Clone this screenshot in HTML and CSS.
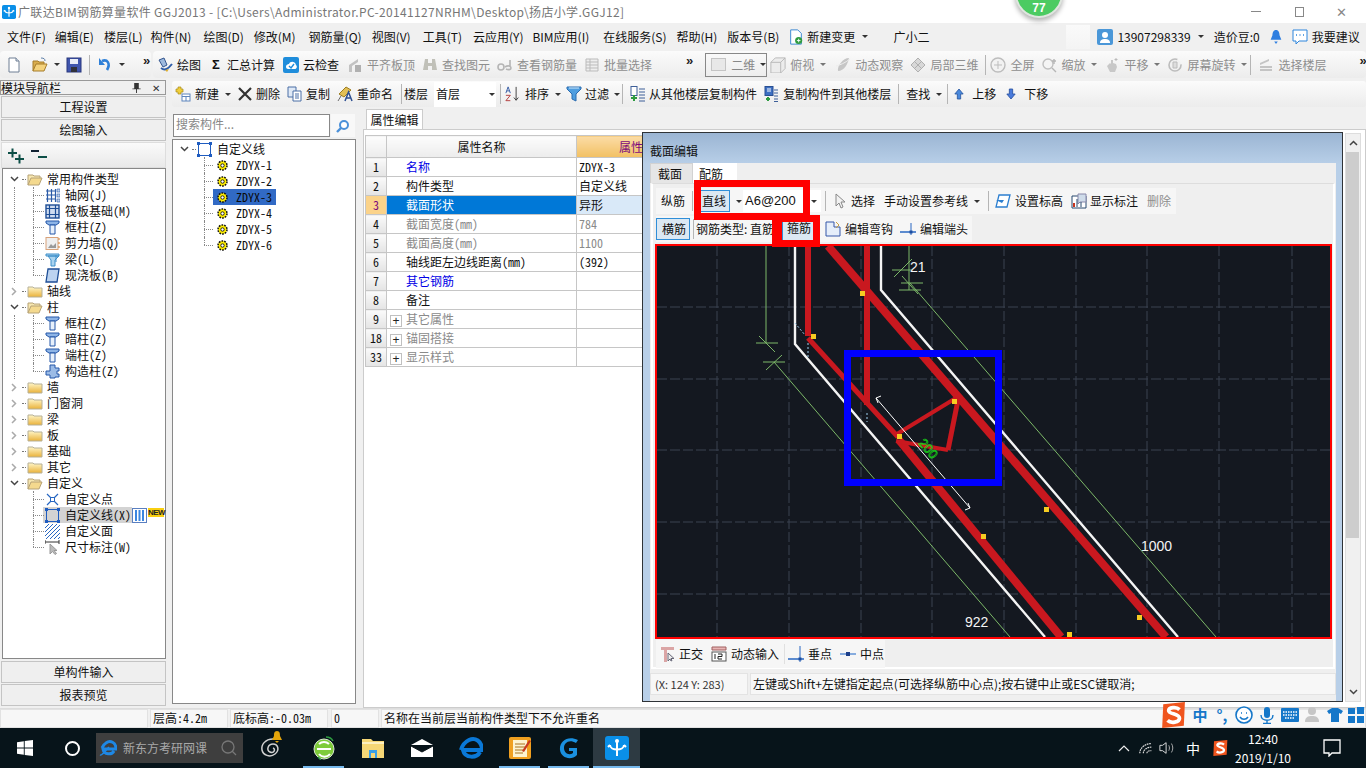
FILE: index.html
```html
<!DOCTYPE html>
<html lang="zh-CN">
<head>
<meta charset="utf-8">
<title>广联达BIM钢筋算量软件 GGJ2013</title>
<link rel="stylesheet" href="styles.css">
</head>
<body>
<svg class="sprite" width="0" height="0">
<defs>
<symbol id="doc" viewBox="0 0 16 16"><path d="M3 1h7l3 3v11H3z" fill="#fff" stroke="#6f7f94"/><path d="M10 1v3h3" fill="#dfe6ee" stroke="#6f7f94"/></symbol>
<symbol id="open" viewBox="0 0 16 16"><path d="M1 14V4h5l1 1h5v2" fill="#d9ad4e" stroke="#a67c2a"/><path d="M1 14l3-7h11l-3 7z" fill="#f4d27c" stroke="#a67c2a"/><path d="M9 1c3 0 4 1 4 3" fill="none" stroke="#5d7fa8"/></symbol>
<symbol id="save" viewBox="0 0 16 16"><rect x="1" y="1" width="14" height="14" fill="#3f55ad" stroke="#28377c"/><rect x="4" y="2" width="8" height="5" fill="#e9edf7"/><rect x="5" y="10" width="6" height="5" fill="#30313a"/></symbol>
<symbol id="undo" viewBox="0 0 16 16"><path d="M5 4c5-2 9 2 5 9" fill="none" stroke="#2f80d8" stroke-width="2.6"/><path d="M2 1v7h6z" fill="#2f80d8"/></symbol>
<symbol id="brush" viewBox="0 0 16 16"><path d="M2 3l5-2 3 7-4 2z" fill="#9db9dd" stroke="#35568f"/><path d="M4 11c4 3 7 1 11-4" fill="none" stroke="#2d5ca8" stroke-width="2"/><path d="M8 13l4-1-2 3z" fill="#e0b030"/></symbol>
<symbol id="cloudchk" viewBox="0 0 16 16"><rect width="16" height="16" rx="2" fill="#1f8ddb"/><path d="M3 10c0-3 3-3 3-3 1-3 6-3 7 1 2 2 0 4-1 4H5c-1 0-2-1-2-2z" fill="#fff"/><path d="M6 9l2 2 3-4" fill="none" stroke="#1f8ddb" stroke-width="1.4"/></symbol>
<symbol id="g-level" viewBox="0 0 16 16"><path d="M2 8l9-6v3L5 9v6H2z" fill="#c2c2c2"/><rect x="8" y="8" width="6" height="7" fill="#b0b0b0"/></symbol>
<symbol id="g-bino" viewBox="0 0 16 16"><path d="M3 2h3v4h4V2h3l2 11h-5V9H6v4H1z" fill="#c0c0b8"/></symbol>
<symbol id="g-glass" viewBox="0 0 16 16"><circle cx="4" cy="10" r="3" fill="none" stroke="#b5b5b5" stroke-width="1.6"/><path d="M8 10c3-2 6-1 6 1s-3 2-5 1M13 3v7" fill="none" stroke="#b5b5b5" stroke-width="1.6"/></symbol>
<symbol id="g-batch" viewBox="0 0 16 16"><path d="M2 2h12v12H2z" fill="#eee" stroke="#bbb"/><path d="M2 5h12M2 8h12M2 11h12M6 2v12" stroke="#bbb"/></symbol>
<symbol id="g-cube" viewBox="0 0 18 18"><path d="M1 6l5-5h11v12l-5 5H1z" fill="#ececec" stroke="#b5b5b5"/><path d="M1 6h11v12M12 6l5-5" fill="none" stroke="#b5b5b5"/></symbol>
<symbol id="g-orbit" viewBox="0 0 16 16"><path d="M3 14c-1-5 5-13 11-13-1 6-5 13-11 13z" fill="#c6c6c6"/><path d="M1 9c4-1 9-3 14-7" stroke="#eee" fill="none"/></symbol>
<symbol id="g-local" viewBox="0 0 16 16"><path d="M8 1l7 7-7 7-7-7z" fill="#d8d8d8" stroke="#b0b0b0"/><path d="M4 4l8 8M12 4l-8 8" stroke="#b0b0b0"/></symbol>
<symbol id="g-full" viewBox="0 0 16 16"><circle cx="8" cy="8" r="7" fill="#f2f2f2" stroke="#bdbdbd" stroke-width="1.4"/><path d="M8 4v8M4 8h8" stroke="#bdbdbd"/></symbol>
<symbol id="g-zoom" viewBox="0 0 16 16"><circle cx="7" cy="7" r="5" fill="#f4f4f4" stroke="#c0c0c0" stroke-width="1.4"/><path d="M11 11l4 4M13 2v5M11 4h4" stroke="#b5b5b5" stroke-width="1.4"/></symbol>
<symbol id="g-pan" viewBox="0 0 16 16"><path d="M3 9l3-3 1 1V3h2v3l3 1 1 3-2 5H6z" fill="#c8c8c8"/><path d="M12 1v3M10.500 2.500h3" stroke="#bbb"/></symbol>
<symbol id="g-rot" viewBox="0 0 16 16"><circle cx="8" cy="8" r="6" fill="#f1f1f1" stroke="#bcbcbc" stroke-width="1.6" stroke-dasharray="30 6"/><path d="M6 5h4v6H6z" fill="#ddd" stroke="#bbb"/></symbol>
<symbol id="g-layer" viewBox="0 0 16 16"><path d="M2 6l9-4v2L2 8zM2 9h12v2H2zM2 12h12v2H2z" fill="#c4c4c4"/></symbol>
<symbol id="newb" viewBox="0 0 16 16"><path d="M3 1h3v2h2v3H6v2H3V6H1V3h2z" fill="#f1cf3b" stroke="#a88a1a" stroke-width=".7"/><rect x="7" y="8" width="8" height="7" fill="#fff" stroke="#5f86bd"/><path d="M7 10.500h8M11 10v5" stroke="#5f86bd"/></symbol>
<symbol id="cross" viewBox="0 0 16 16"><path d="M2 2l12 12M14 2L2 14" stroke="#333" stroke-width="2.2"/></symbol>
<symbol id="copy" viewBox="0 0 16 16"><path d="M1 1h8v10H1z" fill="#dfe9f6" stroke="#4a6fa5"/><path d="M6 5h8v10H6z" fill="#fff" stroke="#4a6fa5"/><path d="M8 8h4M8 10h4M8 12h4" stroke="#4a6fa5"/></symbol>
<symbol id="rename" viewBox="0 0 16 16"><path d="M2 8l7-7 5 3-7 7z" fill="#e2bf55" stroke="#9b7c20"/><path d="M8 15l3.500-9 3.500 9M9.500 12h4" fill="none" stroke="#2d4f91" stroke-width="1.500"/><path d="M1 15l3-5" stroke="#6e6e6e"/></symbol>
<symbol id="sort" viewBox="0 0 18 18"><path d="M1 8l2.500-7L6 8M2 5.500h3" fill="none" stroke="#2c53a0"/><path d="M1 10.500h5L1 16.500h5" fill="none" stroke="#b03232"/><path d="M12.500 1v15M10 13l2.500 3 2.500-3" fill="none" stroke="#333"/></symbol>
<symbol id="funnel" viewBox="0 0 16 16"><path d="M1 1h14v2l-5 5v7l-4-2V8L1 3z" fill="#4f9ee0" stroke="#2b6cb0"/><path d="M3 2h10" stroke="#cfe7fb"/></symbol>
<symbol id="fromf" viewBox="0 0 16 16"><rect x="1" y="0.500" width="6" height="9" fill="#fff" stroke="#3d5f98"/><path d="M9 3h6M9 6h6M9 9h6M9 12h6M9 15h6" stroke="#3d5f98"/><path d="M1 12h6M4 9v6" stroke="#2e9b40" stroke-width="2"/></symbol>
<symbol id="tof" viewBox="0 0 16 16"><rect x="2" y="0.500" width="8" height="9" fill="#3d6fc2" stroke="#294f92"/><path d="M4 3h4M4 5h4" stroke="#fff"/><path d="M11 4h4M11 7h4M11 10h4M11 13h4M11 15.500h4" stroke="#3d5f98"/><path d="M5 11v4M3 13h4" stroke="#2e9b40" stroke-width="2"/></symbol>
<symbol id="up" viewBox="0 0 12 14"><path d="M6 1l5 6H8v6H4V7H1z" fill="#4a89dc" stroke="#28569f"/></symbol>
<symbol id="down" viewBox="0 0 12 14"><path d="M6 13L1 7h3V1h4v6h3z" fill="#4a7bdc" stroke="#28509f"/></symbol>
<symbol id="plusminus" viewBox="0 0 42 18"><path d="M1 6h9M5.500 1.500v9M8 12h9M12.500 7.500v9" stroke="#0d4f47" stroke-width="2"/><path d="M24 4h8" stroke="#123" stroke-width="2"/><path d="M31 10h9" stroke="#0d4f47" stroke-width="2"/></symbol>
<symbol id="chev-d" viewBox="0 0 9 6"><path d="M1 1l3.500 3.500L8 1" fill="none" stroke="#444" stroke-width="1.500"/></symbol>
<symbol id="chev-r" viewBox="0 0 6 9"><path d="M1 1l3.500 3.500L1 8" fill="none" stroke="#aaa" stroke-width="1.500"/></symbol>
<symbol id="fold" viewBox="0 0 16 13"><path d="M1 12V2h5l1 1h8v9z" fill="url(#fy)" stroke="#b6b097"/><defs><linearGradient id="fy" x1="0" y1="0" x2="0" y2="1"><stop offset="0" stop-color="#fff6c8"/><stop offset="1" stop-color="#eab23a"/></linearGradient></defs></symbol>
<symbol id="foldo" viewBox="0 0 16 13"><path d="M1 12V2h5l1 1h6v2" fill="#f7e7b0" stroke="#b6a276"/><path d="M1 12l3-7h11l-3 7z" fill="#f4d98e" stroke="#b6a276"/></symbol>
<symbol id="gridn" viewBox="0 0 15 15"><path d="M1 3h10M1 7h10M1 11h10M2.500 1v13M6.500 1v13M10.500 1v13" stroke="#2b5ba8" stroke-width="1.200"/><path d="M12 1h3v3h-3zM12 6h3v3h-3zM12 11h3v3h-3z" fill="#bcd0ec" stroke="#2b5ba8" stroke-width=".6"/></symbol>
<symbol id="raft" viewBox="0 0 15 15"><rect x="1" y="1" width="13" height="13" fill="#cfdcf0" stroke="#1e4e96" stroke-width="1.400"/><path d="M1 4.500h13M1 10.500h13M4.500 1v13M10.500 1v13" stroke="#1e4e96" stroke-width="1.200"/></symbol>
<symbol id="col" viewBox="0 0 15 15"><path d="M1 1h13v2l-3 2H4L1 3z" fill="#8db4e6" stroke="#2456a8"/><path d="M5 5h5v9H5z" fill="#e7f0fb" stroke="#2456a8"/></symbol>
<symbol id="wall" viewBox="0 0 15 15"><rect x="1" y="1.500" width="12" height="12" fill="#efefef" stroke="#d8a27a"/><path d="M3 12l3-4 2 2 3-3v5z" fill="#999"/><path d="M13 3h2M13 7h2M13 11h2" stroke="#d27a2c"/></symbol>
<symbol id="beam" viewBox="0 0 15 15"><path d="M1 2h13v2H1zM3 4h11l-4 4v6H6V8z" fill="#a9d3ef" stroke="#3f8fc9"/><path d="M11 3v7" stroke="#3f8fc9"/></symbol>
<symbol id="slab" viewBox="0 0 15 15"><path d="M3 1h11l-2 13H1z" fill="#bcd3f0" stroke="#1e4e96" stroke-width="1.300"/></symbol>
<symbol id="scol" viewBox="0 0 15 15"><path d="M5 1h5v3h4v3h-2v3h2v3h-4v1H5v-3H1V7h4V4z" fill="#9bbbe6" stroke="#2456a8"/></symbol>
<symbol id="pt" viewBox="0 0 15 15"><path d="M2 2l11 11M13 2L2 13" stroke="#2867c2" stroke-width="1.200"/><rect x="5.500" y="5.500" width="4" height="4" fill="#fff" stroke="#2867c2"/></symbol>
<symbol id="lnbox" viewBox="0 0 15 15"><rect x="1.500" y="1.500" width="12" height="12" fill="none" stroke="#1f5cc0"/><path d="M0 0h3v3H0zM12 0h3v3h-3zM0 12h3v3H0zM12 12h3v3h-3z" fill="#1f5cc0"/></symbol>
<symbol id="hatch" viewBox="0 0 15 15"><path d="M0 4l4-4M0 8l8-8M0 12L12 0M1 15L15 1M5 15L15 5M9 15l6-6M13 15l2-2" stroke="#2867c2"/></symbol>
<symbol id="dimn" viewBox="0 0 15 15"><path d="M0 0v4M14 0v4M0 2h14" stroke="#333"/><path d="M5 4v10l2.500-2.500 2.500 3 1.500-1-2.500-3H12z" fill="#bbb" stroke="#999"/></symbol>
<symbol id="gear" viewBox="0 0 11 11"><circle cx="5.500" cy="5.500" r="4.500" fill="#ffee00" stroke="#111" stroke-width="1.500" stroke-dasharray="1.700 1.100"/><circle cx="5.500" cy="5.500" r="1.700" fill="#fff" stroke="#111" stroke-width=".9"/></symbol>
<symbol id="col3" viewBox="0 0 15 15"><rect x=".5" y=".5" width="14" height="14" fill="#fff" stroke="#5a7fc0"/><path d="M3 2h2v11H3zM6.500 2h2v11h-2zM10 2h2v11h-2z" fill="#3b86e0"/></symbol>
<symbol id="mag" viewBox="0 0 16 16"><circle cx="9" cy="7" r="4" fill="#fff" stroke="#4a90d9" stroke-width="2"/><path d="M6 10l-4 4" stroke="#4a90d9" stroke-width="2.400"/></symbol>
<symbol id="pin" viewBox="0 0 9 12"><path d="M2 1h5v6h2v1H5v4H4V8H0V7h2z" fill="#333"/></symbol>
<symbol id="arrow" viewBox="0 0 14 16"><path d="M2 1v12l3-3 2 5 2-1-2-5h4z" fill="#f2f2f2" stroke="#888"/></symbol>
<symbol id="para" viewBox="0 0 16 14"><path d="M4 1h11l-3 12H1z" fill="#fff" stroke="#2c7fd0" stroke-width="1.300"/><path d="M1 6h8l-2 3z" fill="#2c7fd0"/></symbol>
<symbol id="note" viewBox="0 0 16 16"><path d="M1 3h14v12H1z" fill="#fff" stroke="#27496e"/><path d="M7 1h8v8H9l-2 2z" fill="#cfdcea" stroke="#88a"/><path d="M2 10h2v4H2z" fill="#c8341f"/><path d="M6 6v8M10 9v5" stroke="#27496e"/></symbol>
<symbol id="hook" viewBox="0 0 16 16"><path d="M1 1h8v5h6v9H1z" fill="#e6eefa" stroke="#3556a8"/><path d="M11 1l3 3-3 3" fill="none" stroke="#c8a040"/></symbol>
<symbol id="end" viewBox="0 0 16 16"><path d="M0 11h16" stroke="#2867c2" stroke-width="1.500"/><path d="M11 2v12" stroke="#2867c2"/><rect x="9.500" y="9.500" width="3" height="3" fill="#1d4ea0"/></symbol>
<symbol id="ortho" viewBox="0 0 16 16"><path d="M2 1h13v3H8v12H5V4H2z" fill="#dba5a5"/><path d="M9 7v8l2-2 1 2 1-.5-1-2h3z" fill="#eee" stroke="#667"/></symbol>
<symbol id="dyn" viewBox="0 0 16 16"><path d="M1 1h14v3H1z" fill="#e8b5b5" stroke="#a06060"/><rect x="1" y="6" width="14" height="9" fill="#fff" stroke="#555"/><path d="M4 8v5M7 8h4v2.500H7V13h4" fill="none" stroke="#222"/></symbol>
<symbol id="perp" viewBox="0 0 16 16"><path d="M0 13h16" stroke="#2867c2" stroke-width="1.500"/><path d="M12 0v16" stroke="#2867c2"/><rect x="10.500" y="11.500" width="3" height="3" fill="#1d4ea0"/></symbol>
<symbol id="mid" viewBox="0 0 16 8"><path d="M0 4h16" stroke="#7ba4dc" stroke-width="1.800"/><rect x="6" y="2" width="4" height="4" fill="#1d3f8a"/></symbol>
<symbol id="fdoc" viewBox="0 0 16 18"><path d="M2 1h8l4 4v12H2z" fill="#fff" stroke="#2c7fd0"/><circle cx="11" cy="13" r="4" fill="#2e9b40"/><path d="M9 13h4M11 11v4" stroke="#fff"/></symbol>
<symbol id="user" viewBox="0 0 16 16"><rect width="16" height="16" rx="2" fill="#4a97d8"/><circle cx="8" cy="6" r="3" fill="#fff"/><path d="M3 14c0-3 2-4 5-4s5 1 5 4z" fill="#fff"/></symbol>
<symbol id="bell" viewBox="0 0 14 18"><path d="M7 1c3 0 4 3 4 6l2 5H1l2-5c0-3 1-6 4-6z" fill="#2e7ee0"/><path d="M5 14h4l-2 3z" fill="#2e7ee0"/></symbol>
<symbol id="chat" viewBox="0 0 16 16"><path d="M1 1h14v11H7l-3 3v-3H1z" fill="#fff" stroke="#2c85dc"/><path d="M4 6h1M7.500 6h1M11 6h1" stroke="#2c85dc" stroke-width="1.300"/></symbol>
<symbol id="win" viewBox="0 0 16 16"><path d="M0 2.200l6.800-1v6.300H0zM7.700 1.100L16 0v7.500H7.700zM0 8.500h6.800v6.300L0 13.800zM7.700 8.500H16V16l-8.300-1.100z" fill="#fff"/></symbol>
<symbol id="ie" viewBox="0 0 18 18"><path d="M15 12c-2 4-10 4-11-2h13c0-7-6-9-10-6-2 1-3 3-4 5" fill="none" stroke="#1e88e5" stroke-width="3"/><path d="M1 16c2 1 4-3 9-8" fill="none" stroke="#1e88e5" stroke-width="1.500"/></symbol>
<symbol id="swirl" viewBox="0 0 24 24"><path d="M15 3C7 3 3 9 4 14s8 8 13 4 3-10-2-10-7 6-3 8 6-3 3-4" fill="none" stroke="#d0d0d0" stroke-width="1.500"/></symbol>
<symbol id="bell2" viewBox="0 0 14 14"><path d="M7 1c3 0 3 3 3 5l2 4H2l2-4c0-2 0-5 3-5z" fill="#e5a50a"/><path d="M5 11h4l-2 2z" fill="#e5a50a"/></symbol>
<symbol id="eg" viewBox="0 0 24 24"><circle cx="12" cy="13" r="10" fill="#7ecb3a" stroke="#dce9d3"/><path d="M5 13h14M17 8a7 7 0 0 0-10 0M7 18a7 7 0 0 0 11 0" fill="none" stroke="#fff" stroke-width="2"/><path d="M14 1c4 0 6 2 7 4M6 21l3 3" stroke="#2e9b40" stroke-width="1.500" fill="none"/></symbol>
<symbol id="folderb" viewBox="0 0 24 24"><path d="M1 3h9l2 2h11v17H1z" fill="#f6d776"/><path d="M1 6h22v2H1z" fill="#fdf0c0"/><path d="M8 14h8v8H8z" fill="#3aa0e8"/><path d="M10 17h4v5h-4z" fill="#f6d776"/></symbol>
<symbol id="mail" viewBox="0 0 24 20"><path d="M1 7l11-6 11 6z" fill="#fff"/><path d="M1 8l11 6 11-6v11H1z" fill="#fff"/><path d="M1 8l11 6 11-6" fill="none" stroke="#0b1418"/></symbol>
<symbol id="edge" viewBox="0 0 24 24"><path d="M21 16c-3 6-15 7-17-2h19c0-9-7-13-13-10C6 6 3 10 2 14" fill="none" stroke="#0a78d7" stroke-width="4"/></symbol>
<symbol id="noteb" viewBox="0 0 24 24"><rect x="1" y="1" width="22" height="22" rx="2" fill="#f0a020"/><path d="M5 4h14v17H5z" fill="#fdf3d0"/><path d="M7 8h10M7 11h10M7 14h8M7 17h8" stroke="#a87420"/><path d="M14 15l7-11 2 1-7 11z" fill="#c83a20"/></symbol>
<symbol id="gapp" viewBox="0 0 24 24"><path d="M21 4C11-1 2 5 3 14c1 8 11 11 17 5v-7h-8v3h4v2c-4 3-9 0-9-5s5-9 12-5z" fill="#1a90e0"/></symbol>
<symbol id="glapp" viewBox="0 0 24 24"><rect width="24" height="24" rx="3" fill="#0a8fe8"/><path d="M12 4v16M5 9c0 6 14 6 14 0" fill="none" stroke="#fff" stroke-width="2"/><circle cx="12" cy="5" r="2" fill="#fff"/><path d="M5 9l-2 2M19 9l2 2" stroke="#fff" stroke-width="2"/></symbol>
<symbol id="wifi" viewBox="0 0 18 16"><path d="M2 14c0-6 6-11 13-11M6 14c0-4 4-7 9-7M10 14c0-2 2-3 5-3" fill="none" stroke="#ddd" stroke-width="1.300" stroke-dasharray="2 .7"/></symbol>
<symbol id="spk" viewBox="0 0 18 16"><path d="M1 5h3l4-3v12l-4-3H1z" fill="none" stroke="#eee"/><path d="M11 5c1 2 1 4 0 6M14 3c2 3 2 7 0 10" fill="none" stroke="#bbb"/></symbol>
<symbol id="caretup" viewBox="0 0 12 7"><path d="M1 6l5-5 5 5" fill="none" stroke="#eee" stroke-width="1.200"/></symbol>
<symbol id="sgs" viewBox="0 0 24 24"><path d="M3 2l20-2-1 22-20 2z" fill="#f0551e"/><path d="M18 7c-3-3-10-2-10 1s10 3 10 7-8 5-11 2" fill="none" stroke="#fff" stroke-width="3.400"/></symbol>
<symbol id="action" viewBox="0 0 18 18"><path d="M1 1h16v13h-8l-3 3v-3H1z" fill="none" stroke="#fff" stroke-width="1.300"/></symbol>
<symbol id="smile" viewBox="0 0 18 18"><circle cx="9" cy="9" r="8" fill="#fff" stroke="#1577c9" stroke-width="1.600"/><path d="M5 11c2 3 6 3 8 0" fill="none" stroke="#1577c9" stroke-width="1.500"/><path d="M6 7h1M11 7h1" stroke="#1577c9" stroke-width="1.600"/></symbol>
<symbol id="mic" viewBox="0 0 14 18"><rect x="4" y="1" width="6" height="11" rx="3" fill="#1577c9"/><path d="M1 9c0 7 12 7 12 0M7 15v3M3 17.500h8" fill="none" stroke="#1577c9" stroke-width="1.400"/></symbol>
<symbol id="kbd" viewBox="0 0 18 16"><rect x="0" y="1" width="18" height="14" rx="1" fill="#1577c9"/><path d="M2 5h14M2 8h14M4 11h10" stroke="#fff" stroke-width="1.400" stroke-dasharray="1.500 1"/></symbol>
<symbol id="person" viewBox="0 0 18 18"><circle cx="8" cy="5" r="4" fill="#c6c6c6"/><path d="M1 16c0-5 3-6 7-6s7 1 7 6z" fill="#c6c6c6"/></symbol>
<symbol id="shirt" viewBox="0 0 16 16"><path d="M5 1h6l5 3-2 3-2-1v9H4V6L2 7 0 4z" fill="#1577c9"/></symbol>
<symbol id="tiles" viewBox="0 0 16 16"><path d="M0 1h7v6H0zM9 0h7v7H9zM0 9h7v7H0zM9 9h7v7H9z" fill="#1577c9"/></symbol>
</defs>
</svg>

<header class="title">
  <svg class="i title-ico"><use href="#glapp"/></svg>
  <span class="title-text">广联达BIM钢筋算量软件 GGJ2013 - [C:\Users\Administrator.PC-20141127NRHM\Desktop\扬店小学.GGJ12]</span>
  <div class="winctl">
    <span class="w-min"></span><span class="w-max"></span><span class="w-close">✕</span>
  </div>
</header>

<nav class="menu">
  <span>文件(F)</span><span class="n1">编辑(E)</span><span>楼层(L)</span><span class="n2">构件(N)</span><span class="p2">绘图(D)</span><span>修改(M)</span><span class="p3">钢筋量(Q)</span><span>视图(V)</span><span class="p2">工具(T)</span><span class="p1">云应用(Y)</span><span class="n1">BIM应用(I)</span><span class="p4">在线服务(S)</span><span>帮助(H)</span><span>版本号(B)</span>
  <span class="m-new"><svg class="i"><use href="#fdoc"/></svg>新建变更<i class="caret"></i></span>
  <span class="m-xiao">广小二</span>
  <span class="m-blank"></span>
  <span class="m-user"><svg class="i"><use href="#user"/></svg>13907298339<i class="caret"></i></span>
  <span class="m-bean">造价豆:0</span>
  <svg class="i m-bell"><use href="#bell"/></svg>
  <span class="m-sug"><svg class="i"><use href="#chat"/></svg>我要建议</span>
</nav>

<div class="tb1">
  <div class="seg seg-a">
    <svg class="i"><use href="#doc"/></svg>
    <span class="sp10"></span>
    <svg class="i"><use href="#open"/></svg><i class="caret"></i>
    <span class="sp6"></span>
    <svg class="i"><use href="#save"/></svg>
    <span class="sep"></span>
    <svg class="i"><use href="#undo"/></svg><i class="caret"></i>
    <b class="more">»</b>
  </div>
  <div class="seg seg-b">
    <span class="btn"><svg class="i"><use href="#brush"/></svg>绘图</span>
    <span class="btn"><span class="sigma">Σ</span>汇总计算</span>
    <span class="btn"><svg class="i"><use href="#cloudchk"/></svg>云检查</span>
    <span class="btn off"><svg class="i"><use href="#g-level"/></svg>平齐板顶</span>
    <span class="btn off"><svg class="i"><use href="#g-bino"/></svg>查找图元</span>
    <span class="btn off"><svg class="i"><use href="#g-glass"/></svg>查看钢筋量</span>
    <span class="btn off"><svg class="i"><use href="#g-batch"/></svg>批量选择</span>
    <b class="more m39">»</b>
    <span class="view2d"><i class="sq"></i>二维<i class="caret"></i></span>
    <span class="btn off mr9"><svg class="i"><use href="#g-cube"/></svg>俯视<i class="caret"></i></span>
    <span class="btn off"><svg class="i"><use href="#g-orbit"/></svg>动态观察</span>
    <span class="btn off"><svg class="i"><use href="#g-local"/></svg>局部三维</span>
    <span class="sep"></span>
    <span class="btn off"><svg class="i"><use href="#g-full"/></svg>全屏</span>
    <span class="btn off"><svg class="i"><use href="#g-zoom"/></svg>缩放<i class="caret"></i></span>
    <span class="btn off"><svg class="i"><use href="#g-pan"/></svg>平移<i class="caret"></i></span>
    <span class="btn off"><svg class="i"><use href="#g-rot"/></svg>屏幕旋转<i class="caret"></i></span>
    <span class="sep sz"></span>
    <span class="btn off"><svg class="i"><use href="#g-layer"/></svg>选择楼层</span>
    <b class="more end">»</b>
  </div>
</div>

<main class="main">
  <aside class="nav">
    <div class="nav-head"><span>模块导航栏</span><svg class="pin"><use href="#pin"/></svg><span class="nav-x">✕</span></div>
    <button class="navbtn">工程设置</button>
    <button class="navbtn">绘图输入</button>
    <div class="nav-tool"><svg class="pm"><use href="#plusminus"/></svg></div>
    <div class="tree sim">
      <div class="r1"><svg class="cd"><use href="#chev-d"/></svg><i class="dots"></i><svg class="fo"><use href="#foldo"/></svg>常用构件类型</div>
      <div class="kids">
        <div class="r2"><svg class="i15"><use href="#gridn"/></svg>轴网(J)</div>
        <div class="r2"><svg class="i15"><use href="#raft"/></svg>筏板基础(M)</div>
        <div class="r2"><svg class="i15"><use href="#col"/></svg>框柱(Z)</div>
        <div class="r2"><svg class="i15"><use href="#wall"/></svg>剪力墙(Q)</div>
        <div class="r2"><svg class="i15"><use href="#beam"/></svg>梁(L)</div>
        <div class="r2"><svg class="i15"><use href="#slab"/></svg>现浇板(B)</div>
      </div>
      <div class="r1"><svg class="cr"><use href="#chev-r"/></svg><i class="dots"></i><svg class="fo"><use href="#fold"/></svg>轴线</div>
      <div class="r1"><svg class="cd"><use href="#chev-d"/></svg><i class="dots"></i><svg class="fo"><use href="#foldo"/></svg>柱</div>
      <div class="kids">
        <div class="r2"><svg class="i15"><use href="#col"/></svg>框柱(Z)</div>
        <div class="r2"><svg class="i15"><use href="#col"/></svg>暗柱(Z)</div>
        <div class="r2"><svg class="i15"><use href="#col"/></svg>端柱(Z)</div>
        <div class="r2"><svg class="i15"><use href="#scol"/></svg>构造柱(Z)</div>
      </div>
      <div class="r1"><svg class="cr"><use href="#chev-r"/></svg><i class="dots"></i><svg class="fo"><use href="#fold"/></svg>墙</div>
      <div class="r1"><svg class="cr"><use href="#chev-r"/></svg><i class="dots"></i><svg class="fo"><use href="#fold"/></svg>门窗洞</div>
      <div class="r1"><svg class="cr"><use href="#chev-r"/></svg><i class="dots"></i><svg class="fo"><use href="#fold"/></svg>梁</div>
      <div class="r1"><svg class="cr"><use href="#chev-r"/></svg><i class="dots"></i><svg class="fo"><use href="#fold"/></svg>板</div>
      <div class="r1"><svg class="cr"><use href="#chev-r"/></svg><i class="dots"></i><svg class="fo"><use href="#fold"/></svg>基础</div>
      <div class="r1"><svg class="cr"><use href="#chev-r"/></svg><i class="dots"></i><svg class="fo"><use href="#fold"/></svg>其它</div>
      <div class="r1"><svg class="cd"><use href="#chev-d"/></svg><i class="dots"></i><svg class="fo"><use href="#foldo"/></svg>自定义</div>
      <div class="kids last">
        <div class="r2"><svg class="i15"><use href="#pt"/></svg>自定义点</div>
        <div class="r2 sel"><span class="sel-bg"><svg class="i15"><use href="#lnbox"/></svg>自定义线(X)</span><svg class="i15"><use href="#col3"/></svg><span class="newtag">NEW</span></div>
        <div class="r2"><svg class="i15"><use href="#hatch"/></svg>自定义面</div>
        <div class="r2"><svg class="i15"><use href="#dimn"/></svg>尺寸标注(W)</div>
      </div>
    </div>
    <button class="navbtn low">单构件输入</button>
    <button class="navbtn">报表预览</button>
  </aside>

  <section class="work">
    <div class="tb2">
      <span class="btn"><svg class="i"><use href="#newb"/></svg>新建<i class="caret"></i></span>
      <span class="btn g3 mr7"><svg class="i"><use href="#cross"/></svg>删除</span>
      <span class="btn g3 mr7"><svg class="i"><use href="#copy"/></svg>复制</span>
      <span class="btn"><svg class="i"><use href="#rename"/></svg>重命名</span>
      <span class="sep sa"></span>
      <span class="btn">楼层</span>
      <span class="floor">首层<i class="caret"></i></span>
      <span class="sep"></span>
      <span class="btn mr5"><svg class="i"><use href="#sort"/></svg>排序<i class="caret"></i></span>
      <span class="btn g3"><svg class="i"><use href="#funnel"/></svg>过滤<i class="caret"></i></span>
      <span class="sep sb"></span>
      <span class="btn g3"><svg class="i"><use href="#fromf"/></svg>从其他楼层复制构件</span>
      <span class="btn"><svg class="i"><use href="#tof"/></svg>复制构件到其他楼层</span>
      <span class="sep sc1"></span>
      <span class="btn">查找<i class="caret"></i></span>
      <span class="sep sd"></span>
      <span class="btn mr10"><svg class="arr"><use href="#up"/></svg>上移</span>
      <span class="btn"><svg class="arr"><use href="#down"/></svg>下移</span>
    </div>
    <div class="panes">
      <div class="comp">
        <div class="search"><span class="search-in">搜索构件...</span><span class="search-go"><svg class="i"><use href="#mag"/></svg></span></div>
        <div class="ctree sim">
          <div class="cr1"><svg class="cd"><use href="#chev-d"/></svg><i class="dots"></i><svg class="i15"><use href="#lnbox"/></svg>自定义线</div>
          <div class="ckids">
            <div class="cr2"><span class="cw"><svg class="gr"><use href="#gear"/></svg>ZDYX-1</span></div>
            <div class="cr2"><span class="cw"><svg class="gr"><use href="#gear"/></svg>ZDYX-2</span></div>
            <div class="cr2 on"><span class="cw"><svg class="gr"><use href="#gear"/></svg>ZDYX-3</span></div>
            <div class="cr2"><span class="cw"><svg class="gr"><use href="#gear"/></svg>ZDYX-4</span></div>
            <div class="cr2"><span class="cw"><svg class="gr"><use href="#gear"/></svg>ZDYX-5</span></div>
            <div class="cr2"><span class="cw"><svg class="gr"><use href="#gear"/></svg>ZDYX-6</span></div>
          </div>
        </div>
      </div>
      <div class="props">
        <div class="ptabs"><span class="ptab">属性编辑</span></div>
        <div class="pbody sim">
          <div class="pclip">
            <table class="ptable">
              <colgroup><col class="c1"><col class="c2"><col class="c3"></colgroup>
              <thead><tr><th class="no"></th><th>属性名称</th><th class="hot">属性</th></tr></thead>
              <tbody>
                <tr><td class="no">1</td><td class="nm blue">名称</td><td>ZDYX-3</td></tr>
                <tr><td class="no">2</td><td class="nm">构件类型</td><td>自定义线</td></tr>
                <tr class="cur"><td class="no">3</td><td class="nm">截面形状</td><td>异形</td></tr>
                <tr class="gray"><td class="no">4</td><td class="nm">截面宽度(mm)</td><td>784</td></tr>
                <tr class="gray"><td class="no">5</td><td class="nm">截面高度(mm)</td><td>1100</td></tr>
                <tr><td class="no">6</td><td class="nm">轴线距左边线距离(mm)</td><td>(392)</td></tr>
                <tr><td class="no">7</td><td class="nm blue">其它钢筋</td><td></td></tr>
                <tr><td class="no">8</td><td class="nm">备注</td><td></td></tr>
                <tr class="gray"><td class="no k">9</td><td class="nm"><i class="plus">+</i>其它属性</td><td></td></tr>
                <tr class="gray"><td class="no k">18</td><td class="nm"><i class="plus">+</i>锚固搭接</td><td></td></tr>
                <tr class="gray"><td class="no k">33</td><td class="nm"><i class="plus">+</i>显示样式</td><td></td></tr>
              </tbody>
            </table>
          </div>
          <div class="vscroll"><span class="v-up"><svg class="sc"><use href="#chev-d"/></svg></span><span class="v-thumb"></span><span class="v-down"><svg class="sc"><use href="#chev-d"/></svg></span></div>
        </div>
      </div>
    </div>
  </section>
</main>

<footer class="status sim">
  <span class="st s0"></span><span class="st s1">层高:4.2m</span><span class="st s2">底标高:-0.03m</span><span class="st s3">0</span><span class="st s4">名称在当前层当前构件类型下不允许重名</span>
</footer>

<div class="taskbar">
  <span class="tk start"><svg class="i"><use href="#win"/></svg></span>
  <span class="tk cortana"><i class="ring"></i></span>
  <span class="tsearch"><svg class="ts-ie"><use href="#ie"/></svg><span>新东方考研网课</span><svg class="ts-mag" viewBox="0 0 16 16"><circle cx="7" cy="7" r="6" fill="none" stroke="#777" stroke-width="1.300"/><path d="M11 11l4 4" stroke="#777" stroke-width="1.300"/></svg></span>
  <span class="tk swirl"><svg class="t24"><use href="#swirl"/></svg><svg class="tb-bell"><use href="#bell2"/></svg></span>
  <span class="tk app run"><svg class="t24"><use href="#eg"/></svg></span>
  <span class="tk app"><svg class="t24"><use href="#folderb"/></svg></span>
  <span class="tk app"><svg class="t24"><use href="#mail"/></svg></span>
  <span class="tk app"><svg class="t24"><use href="#edge"/></svg></span>
  <span class="tk app run"><svg class="t24"><use href="#noteb"/></svg></span>
  <span class="tk app run"><svg class="t24"><use href="#gapp"/></svg></span>
  <span class="tk app act"><svg class="t24"><use href="#glapp"/></svg></span>
  <div class="tray">
    <span class="tr"><svg class="up-ico"><use href="#caretup"/></svg></span>
    <span class="tr w20"><svg class="i"><use href="#wifi"/></svg></span>
    <span class="tr w22"><svg class="i"><use href="#spk"/></svg></span>
    <span class="tr zh">中</span>
    <span class="tr"><svg class="i"><use href="#sgs"/></svg></span>
    <span class="clock"><span>12:40</span><span>2019/1/10</span></span>
    <span class="act-c"><svg class="i18"><use href="#action"/></svg></span>
  </div>
</div>

<div class="gauge"><span>77</span></div>

<section class="dlg">
  <div class="dlg-title">截面编辑</div>
  <div class="dlg-body">
    <div class="dtabs"><span class="dtab">截面</span><span class="dtab on">配筋</span></div>
    <div class="dpanel">
      <div class="dbar d1">
        <span class="dtxt">纵筋</span><span class="sep"></span>
        <span class="tog t-line">直线</span><i class="caret"></i>
        <span class="spec">A6@200<i class="caret"></i></span>
        <span class="sep se"></span>
        <span class="btn g2"><svg class="i"><use href="#arrow"/></svg>选择</span>
        <span class="btn">手动设置参考线<i class="caret"></i></span>
        <span class="sep sf"></span>
        <span class="btn mr8"><svg class="i"><use href="#para"/></svg>设置标高</span>
        <span class="btn g3"><svg class="i"><use href="#note"/></svg>显示标注</span>
        <span class="btn off">删除</span>
      </div>
      <div class="dbar d2">
        <span class="tog t-h">横筋</span><span class="sep"></span>
        <span class="dtype">钢筋类型: 直筋</span>
        <span class="tog t-g">箍筋</span>
        <span class="btn"><svg class="i"><use href="#hook"/></svg>编辑弯钩</span>
        <span class="btn"><svg class="i"><use href="#end"/></svg>编辑端头</span>
      </div>
      <svg class="canvas" viewBox="657 246 673 391">
        <g class="grid">
          <path d="M717 246V637M789 246V637M861 246V637M932 246V637M1004 246V637M1076 246V637M1147 246V637M1219 246V637M1292 246V637"/>
          <path d="M657 307H1330M657 379H1330M657 450H1330M657 522H1330M657 594H1330"/>
        </g>
        <g class="gl">
          <path d="M766 246V343M756 343H778M759 336L775 352M763 362H785M766 370L782 355M774 362L1010 637"/>
          <path d="M909 246V290M892 270H912M894 277L912 259M901 283H923M899 290H921M902 276L918 294M910 283L1216 637"/>
        </g>
        <g class="wl"><path d="M795 246V344L1045 637"/><path d="M881 246V290L1178 637"/></g>
        <g class="rd">
          <path class="r8" d="M828 246L1166 637"/>
          <path class="r6" d="M808 246V336"/>
          <path class="r5" d="M808 338L898 437"/>
          <path class="r8" d="M899 440L1061 637"/>
          <path class="r6" d="M867 246V405"/>
          <path class="r4" d="M897 434L956 398"/>
          <path class="r5" d="M958 400L948 450"/>
          <path class="r4" d="M948 450L896 441"/>
        </g>
        <path class="dim" d="M876 398L970 508M881 396L876 398L878 403M965 510L970 508L968 503"/>
        <path class="blued" d="M795 323L805 335M808 343V358M867 413V422"/>
        <text class="rebar-num" transform="rotate(50 928 449)" x="917" y="453">200</text>
        <g class="yl"><rect x="860" y="291" width="5" height="5"/><rect x="811" y="334" width="5" height="5"/><rect x="897" y="434" width="5" height="5"/><rect x="952" y="399" width="5" height="5"/><rect x="1044" y="507" width="5" height="5"/><rect x="981" y="534" width="5" height="5"/><rect x="1137" y="615" width="5" height="5"/><rect x="1067" y="632" width="5" height="5"/></g>
        <g class="dimtxt"><text x="910" y="272">21</text><text x="1141" y="551">1000</text><text x="965" y="627">922</text></g>
      </svg>
      <div class="dbar d3">
        <span class="btn"><svg class="i"><use href="#ortho"/></svg>正交</span>
        <span class="btn"><svg class="i"><use href="#dyn"/></svg>动态输入</span>
        <span class="sep"></span>
        <span class="btn"><svg class="i"><use href="#perp"/></svg>垂点</span>
        <span class="btn"><svg class="i"><use href="#mid"/></svg>中点</span>
      </div>
    </div>
    <div class="dstatus"><span class="ds1">(X: 124 Y: 283)</span><span class="ds2">左键或Shift+左键指定起点(可选择纵筋中心点);按右键中止或ESC键取消;</span></div>
  </div>
</section>

<div class="mark mark-a"></div>
<div class="mark mark-b"></div>
<div class="mark mark-c"></div>

<div class="sogou">
  <svg class="sg-s"><use href="#sgs"/></svg>
  <span class="sg-t">中</span><span class="sg-t sg-p">°,</span>
  <svg class="i18"><use href="#smile"/></svg><svg class="i18"><use href="#mic"/></svg><svg class="i18"><use href="#kbd"/></svg><svg class="i18"><use href="#person"/></svg><svg class="i16"><use href="#shirt"/></svg><svg class="i16"><use href="#tiles"/></svg>
</div>
</body>
</html>
```

FILE: styles.css
```css
* { box-sizing: border-box; }
html, body { margin: 0; padding: 0; }
body {
  width: 1366px; height: 768px; overflow: hidden; position: relative;
  display: flex; flex-direction: column;
  background: #f0f0f0; color: #111;
  font: 12px/16px "Noto Sans CJK SC", "Liberation Sans", sans-serif;
}
.sprite { position: absolute; }
.sim { font-family: "Noto Sans Mono CJK SC", "Noto Sans CJK SC", monospace; }
.i { width: 16px; height: 16px; flex: none; }
.i15 { width: 15px; height: 15px; flex: none; }
.i16 { width: 16px; height: 16px; flex: none; }
.i18 { width: 18px; height: 18px; flex: none; }
.caret { display: inline-block; flex: none; width: 0; height: 0; border: 3px solid transparent; border-top: 3px solid #333; border-bottom: 0; margin-left: 6px; }
.sep { flex: none; width: 1px; height: 20px; background: #b5b5b5; margin: 0 7px; }
.btn { display: inline-flex; align-items: center; gap: 4px; margin-right: 8px; white-space: nowrap; flex: none; }
.btn .caret { margin-left: 2px; }
.off { color: #8e8e8e; }
.off .caret { border-top-color: #777; }

/* title */
.title { height: 23px; background: #fff; display: flex; align-items: center; padding-left: 2px; flex: none; }
.title-ico { width: 14px; height: 14px; margin-right: 2px; }
.title-text { color: #777; white-space: nowrap; letter-spacing: .33px; }
.winctl { margin-left: auto; display: flex; align-items: center; color: #888; }
.w-min { width: 10px; height: 1px; background: #888; margin-right: 34px; }
.w-max { width: 9px; height: 10px; border: 1px solid #888; margin-right: 32px; }
.w-close { width: 20px; font-size: 13px; margin-right: 10px; }

/* menu */
.menu { height: 27px; flex: none; display: flex; align-items: center; gap: 10px; padding-left: 7px; background: #f0f0f0; white-space: nowrap; }
.n1 { margin-left: -1px; } .n2 { margin-left: -2px; } .p1 { margin-left: 1px; } .p2 { margin-left: 2px; } .p3 { margin-left: 3px; } .p4 { margin-left: 4px; }
.m-new { display: flex; align-items: center; gap: 3px; margin-left: -1px; }
.m-new .caret { margin-left: 4px; }
.m-xiao { margin-left: 15px; }
.m-blank { width: 24px; height: 24px; background: linear-gradient(#fafafa, #f4f4f4); margin-left: 127px; }
.m-user { display: flex; align-items: center; gap: 4px; margin-left: -3px; }
.m-user .caret { margin-left: 3px; }
.m-bean { margin-left: 0; }
.m-bell { margin-left: -2px; }
.m-sug { display: flex; align-items: center; gap: 4px; margin-left: -2px; }

/* toolbar 1 */
.tb1 { height: 27px; margin-top: 1px; flex: none; display: flex; gap: 2px; }
.seg { display: flex; align-items: center; border-radius: 4px; background: linear-gradient(#fbfbfb, #ececec); height: 27px; }
.seg-a { width: 151px; padding-left: 6px; }
.seg-b { flex: 1; min-width: 0; padding-left: 4px; }
.sp10 { width: 10px; } .sp6 { width: 6px; }
.seg-a .sep { margin: 0 7px 0 7px; }
.more { font: 700 13px/12px "Liberation Sans", sans-serif; align-self: flex-start; margin: 4px 0 0 18px; color: #222; }
.more.m39 { margin-left: 27px; margin-right: 12px; }
.more.end { margin-left: 26px; }
.seg-b .sep { margin: 0 4px 0 0; }
.seg-b .sep.sz { margin: 0 7px 0 -4px; }
.seg-b .off { margin-right: 7px; }
.seg-b .off.mr9 { margin-right: 9px; }
.sigma { font: 700 13px "Liberation Sans", sans-serif; width: 14px; margin-right: 0; text-align: center; }
.view2d { width: 62px; height: 24px; border: 1px solid #888; display: flex; align-items: center; color: #888; margin-right: 3px; flex: none; }
.view2d .sq { width: 15px; height: 13px; background: #e8e8e8; border: 1px solid #c4c4c4; margin: 0 5px; }
.view2d .caret { margin-left: 5px; }

/* main */
.main { height: 630px; flex: none; display: flex; }
.nav { width: 167px; flex: none; display: flex; flex-direction: column; padding-top: 2px; }
.nav-head { height: 15px; display: flex; align-items: center; border: 1px solid #999; background: #f0f0f0; margin-right: 1px; line-height: 13px; }
.nav-head span:first-child { flex: 1; }
.pin { width: 9px; height: 11px; margin-right: 11px; }
.nav-x { font-size: 10px; width: 13px; color: #333; }
.navbtn { height: 22px; padding: 0; margin: 1px 1px 0 1px; border: 1px solid #c4c4c4; border-radius: 0; background: #efefef; font: inherit; color: #111; flex: none; }
.nav-tool { height: 26px; margin: 1px 1px 0; background: linear-gradient(#fafafa, #e9e9e9); border: 1px solid #ddd; flex: none; padding: 4px 0 0 5px; }
.pm { width: 42px; height: 18px; }
.tree { margin: 0 1px 0 2px; border: 1px solid #888; background: #fff; height: 491px; padding-top: 2px; flex: none; position: relative; line-height: 16px; }
.low { margin-top: 2px; }
.r1 { height: 16px; display: flex; align-items: center; padding-left: 0; white-space: nowrap; }
.cd { width: 9px; height: 6px; margin: 0 0 0 7px; flex: none; }
.cr { width: 6px; height: 9px; margin: 0 2px 0 8px; flex: none; }
.dots { width: 4px; height: 1px; border-top: 1px dotted #777; margin: 0 1px 0 3px; flex: none; }
.fo { width: 16px; height: 13px; margin-right: 4px; flex: none; }
.kids { margin-left: 11px; border-left: 1px dotted #888; padding-left: 18px; }
.kids.last { border-left-color: transparent; }
.r2 { height: 16px; display: flex; align-items: center; gap: 5px; position: relative; padding-left: 12px; margin-left: 0; white-space: nowrap; }
.r2::before { content: ""; position: absolute; left: 0; top: 0; height: 16px; border-left: 1px dotted #888; }
.r2::after { content: ""; position: absolute; left: 0; top: 8px; width: 11px; border-top: 1px dotted #888; }
.r2:last-child::before { height: 8px; }
.sel { gap: 0; }
.sel-bg { display: flex; align-items: center; gap: 5px; background: #d3d3d3; height: 16px; padding-right: 1px; margin-left: -2px; padding-left: 2px; }
.newtag { font: 700 8px/9px "Liberation Sans", sans-serif; letter-spacing: -.6px; color: #222; background: #f9cf10; width: 16px; margin: -6px 0 0 1px; height: 9px; flex: none; }

.work { flex: 1; margin-left: 5px; min-width: 0; display: flex; flex-direction: column; padding-top: 3px; }
.tb2 { height: 26px; flex: none; display: flex; align-items: center; padding-left: 3px; background: linear-gradient(#fbfbfb, #ececec); border-radius: 3px; }
.tb2 .btn { margin-right: 6px; }
.tb2 .btn.g3 { gap: 3px; }
.tb2 .btn.mr7 { margin-right: 7px; }
.tb2 .sep { margin: 0 4px 0 2px; height: 20px; }
.tb2 .sep.sa { margin: 0 2px 0 2px; }
.tb2 .sep.sb { margin: 0 7px 0 -4px; }
.tb2 .sep.sc1 { margin: 0 7px 0 1px; }
.tb2 .sep.sd { margin: 0 6px 0 -1px; }
.tb2 .btn.mr5 { margin-right: 5px; }
.tb2 .btn.mr10 { margin-right: 10px; }
.arr { width: 10px; height: 14px; margin-right: 4px; }
.floor { width: 62px; height: 25px; background: #fff; display: flex; align-items: center; padding-left: 2px; margin: 0 2px 0 0; flex: none; }
.floor .caret { margin-left: 29px; }
.panes { flex: 1; display: flex; min-height: 0; }
.comp { width: 184px; flex: none; padding: 7px 0 0 0; }
.search { display: flex; height: 23px; padding-left: 1px; }
.search-in { width: 157px; border: 1px solid #888; background: #fff; color: #888; line-height: 18px; padding-left: 2px; }
.search-go { width: 24px; display: flex; align-items: center; justify-content: center; background: #f8f8f8; margin-left: 1px; }
.ctree { margin-top: 2px; height: 565px; border: 1px solid #888; background: #fff; padding-top: 1px; }
.cr1 { height: 16px; display: flex; align-items: center; white-space: nowrap; gap: 0; }
.cr1 .cd { margin-left: 7px; }
.cr1 .i15 { margin-right: 5px; }
.ckids { margin-left: 31px; }
.cr2 { height: 16px; display: flex; align-items: center; position: relative; padding-left: 9px; }
.cr2::before { content: ""; position: absolute; left: 0; top: 0; height: 16px; border-left: 1px dotted #888; }
.cr2::after { content: ""; position: absolute; left: 0; top: 8px; width: 9px; border-top: 1px dotted #888; }
.cr2:last-child::before { height: 8px; }
.cw { display: flex; align-items: center; gap: 8px; height: 16px; padding: 0 4px; }
.gr { width: 11px; height: 11px; flex: none; }
.cr2.on .cw { background: #316ac5; color: #0a0a0a; }
.props { flex: 1; min-width: 0; margin-left: 7px; display: flex; flex-direction: column; }
.ptabs { height: 22px; padding: 2px 0 0 3px; flex: none; }
.ptab { display: inline-block; width: 57px; height: 20px; background: #fff; border: 1px solid #ccc; border-bottom: 0; text-align: center; line-height: 19px; }
.pbody { flex: 1; min-height: 0; background: #fff; border: 1px solid #ccc; display: flex; padding: 3px 4px 2px 1px; height: 575px; }
.pclip { flex: none; width: 277px; overflow: hidden; padding-top: 2px; }
.ptable { border-collapse: collapse; table-layout: fixed; width: 337px; }
.c1 { width: 21px; } .c2 { width: 190px; } .c3 { width: 126px; }
.ptable th, .ptable td { border: 1px solid #c6c6c6; padding: 0; height: 19px; font-weight: 400; white-space: nowrap; overflow: hidden; }
.ptable th { height: 22px; background: linear-gradient(#fcfcfc, #ececec); }
.ptable th.hot { background: linear-gradient(#fbdca6, #f2c062); color: #7c0a7c; text-align: left; padding-left: 42px; }
.ptable td { padding-left: 2px; }
.ptable td.no { background: linear-gradient(#fafafa, #e4e4e4); text-align: center; padding: 0; }
.ptable td.nm { padding-left: 19px; }
.blue td.nm, td.blue { color: #0000e6; }
.cur td.nm { background: #0078d7; color: #fff; }
.cur td { background: #d9e9f8; }
.cur td.no { background: #fbd38a; color: #7c0a7c; }
.gray td { color: #8a8a8a; }
.gray td.no { color: #111; }
.plus { display: inline-block; width: 12px; height: 12px; border: 1px solid #c0c0c0; font: 400 12px/10px "Liberation Sans", sans-serif; text-align: center; color: #222; margin: 0 4px 0 -16px; vertical-align: -1px; }
.vscroll { width: 16px; margin-left: auto; flex: none; display: flex; flex-direction: column; background: #f0f0f0; border: 1px solid #ddd; height: 569px; }
.v-up, .v-down { height: 18px; display: flex; align-items: center; justify-content: center; flex: none; }
.v-up .sc { transform: rotate(180deg); }
.sc { width: 9px; height: 6px; }
.v-thumb { height: 386px; background: #cdcdcd; flex: none; margin: 0 1px auto 0; }

/* status */
.status { height: 20px; flex: none; display: flex; gap: 2px; background: #f0f0f0; border-top: 1px solid #ddd; }
.st { background: #f7f7f7; border: 1px solid #e2e2e2; padding-left: 2px; line-height: 16px; white-space: nowrap; }
.s0 { width: 148px; } .s1 { width: 78px; } .s2 { width: 98px; margin-right: 1px; } .s3 { width: 48px; } .s4 { flex: 1; }

/* taskbar */
.taskbar { height: 40px; flex: none; display: flex; align-items: stretch; background: #07141a; color: #fff; }
.tk { display: flex; align-items: center; justify-content: center; flex: none; position: relative; }
.start { width: 49px; }
.cortana { width: 47px; }
.ring { width: 15px; height: 15px; border: 2px solid #fff; border-radius: 50%; }
.tsearch { width: 147px; margin: 5px 2px 5px 0; background: #3e3e3e; display: flex; align-items: center; flex: none; color: #a9a9a9; font-size: 12px; }
.ts-ie { width: 18px; height: 18px; margin: 0 6px 0 3px; flex: none; }
.ts-mag { width: 16px; height: 16px; margin-left: 14px; flex: none; }
.swirl { width: 49px; margin-right: 5px; }
.t24 { width: 24px; height: 24px; }
.tb-bell { width: 14px; height: 14px; position: absolute; left: 25px; top: 2px; }
.app { width: 49px; }
.run::after { content: ""; position: absolute; left: 4px; right: 4px; bottom: 0; height: 2px; background: #76b9ed; }
.act { background: #2d3a42; width: 47px; }
.act::after { content: ""; position: absolute; left: 0; right: 0; bottom: 0; height: 2px; background: #76b9ed; }
.tray { margin-left: auto; display: flex; align-items: center; height: 100%; }
.tr { display: flex; align-items: center; justify-content: center; width: 24px; flex: none; }
.tr.w20 { width: 20px; } .tr.w22 { width: 22px; }
.up-ico { width: 12px; height: 7px; }
.zh { width: 30px; font-size: 14px; }
.clock { width: 58px; display: flex; flex-direction: column; align-items: center; line-height: 19px; white-space: nowrap; font-size: 12px; margin-left: 2px; }
.act-c { width: 44px; margin: 0 12px 0 18px; display: flex; justify-content: center; }

/* gauge */
.gauge { position: absolute; left: 1015px; top: -30px; width: 48px; height: 48px; border-radius: 50%; background: #4ccb62; border: 2px solid #dfe6df; box-shadow: 0 3px 5px rgba(0,0,0,.3); color: #fff; text-align: center; font: 700 12px/12px "Liberation Sans", sans-serif; padding-top: 30px; }

/* dialog */
.dlg { position: absolute; left: 642px; top: 132px; width: 701px; height: 570px; border: 1px solid #2f3337; background: linear-gradient(#9bb5d3 0, #b8cfe8 31px); display: flex; flex-direction: column; }
.dlg-title { height: 30px; flex: none; padding: 11px 0 0 7px; line-height: 14px; }
.dlg-body { flex: 1; margin: 0 6px 0 7px; background: #efefef; display: flex; flex-direction: column; }
.dtabs { height: 20px; flex: none; display: flex; }
.dtab { width: 43px; background: #e6e6e6; border: 1px solid #d2d2d2; padding-left: 7px; line-height: 20px; border-bottom: 0; }
.dtab.on { width: 44px; background: #fff; border-color: #fff; padding-left: 5px; }
.dpanel { margin: 0 1px 0 1px; height: 486px; border: 2px solid #fff; border-top: 1px solid #ddd; flex: none; padding: 4px 0 0 3px; }
.dbar { display: flex; align-items: center; white-space: nowrap; }
.d1 { height: 26px; width: 520px; background: #f6f6f6; padding-left: 5px; }
.d1 .btn { margin-right: 9px; }
.d1 .btn.mr8 { margin-right: 8px; }
.d1 .btn.g2 { gap: 2px; }
.d1 .btn.g3 { gap: 3px; }
.d1 .sep { margin: 0 7px; }
.d1 .sep.se { margin: 0 7px 0 4px; }
.d1 .sep.sf { margin: 0 6px 0 -1px; }
.dtxt { flex: none; }
.tog { flex: none; height: 22px; line-height: 20px; background: #dbe8f3; border: 1px solid #2f8ed8; padding: 0 4px; }
.t-line { width: 30px; padding: 0 1px; }
.spec { flex: none; width: 78px; height: 22px; background: #fff; margin-left: 1px; padding-left: 2px; display: flex; align-items: center; font-size: 13px; font-family: "Liberation Sans", sans-serif; }
.spec .caret { margin-left: 15px; }
.d2 { height: 26px; width: 316px; margin-top: 2px; background: #f6f6f6; }
.t-h { padding: 0 5px; width: 34px; }
.d2 .sep { margin: 0 2px 0 3px; }
.dtype { width: 86px; overflow: hidden; flex: none; }
.t-g { border: 0; border-left: 1px solid #2f8ed8; padding: 0 4px; height: 22px; width: 31px; margin-right: 12px; }
.d2 .btn { margin-right: 7px; }
.canvas { display: block; width: 677px; height: 395px; border: 2px solid #f00; background: #141820; margin: 2px 0 0 -1px; }
.grid path { stroke: #3a4351; fill: none; stroke-dasharray: 10 3; }
.gl path { stroke: #7cb868; fill: none; stroke-width: 1; }
.wl path { stroke: #f4f4f4; fill: none; stroke-width: 2.4; }
.rd path { stroke: #c9181f; fill: none; }
.r8 { stroke-width: 8; } .r6 { stroke-width: 6; } .r5 { stroke-width: 5; } .r4 { stroke-width: 4; }
.dim { stroke: #fff; fill: none; stroke-width: 1; }
.blued { stroke: #9fd0f0; fill: none; stroke-dasharray: 2 2; }
.yl rect { fill: #f6cc22; }
.dimtxt text { fill: #f4f4f4; font: 14px "Liberation Sans", sans-serif; }
.rebar-num { fill: none; stroke: #18d018; stroke-width: .7; font: 13px "Liberation Sans", sans-serif; }
.d3 { height: 28px; width: 229px; margin-top: 1px; background: #f6f6f6; padding-left: 3px; }
.d3 .btn { margin-right: 8px; }
.d3 .sep { margin: 0 3px 0 -3px; height: 20px; background: #e0e0e0; }
.dstatus { margin-top: 4px; height: 22px; flex: none; display: flex; gap: 2px; }
.ds1, .ds2 { background: #f7f7f7; border: 1px solid #e3e3e3; line-height: 20px; padding-left: 2px; white-space: nowrap; }
.ds1 { width: 98px; padding-left: 4px; color: #333; font-size: 11px; }
.ds2 { flex: 1; }

/* annotation marks */
.mark { position: absolute; }
.mark-a { left: 694px; top: 180px; width: 116px; height: 40px; border: 7px solid #f00; }
.mark-b { left: 772px; top: 215px; width: 48px; height: 32px; border: 7px solid #f00; border-left-width: 10px; }
.mark-c { left: 844px; top: 350px; width: 158px; height: 136px; border: 7px solid #00f; }

/* sogou */
.sogou { position: absolute; left: 1160px; top: 702px; width: 206px; height: 26px; display: flex; align-items: center; color: #1577c9; font-weight: 700; gap: 5px; }
.sg-s { width: 26px; height: 26px; flex: none; }
.sg-t { font-size: 15px; width: 18px; text-align: center; flex: none; }
.sg-p { width: 16px; }
```
